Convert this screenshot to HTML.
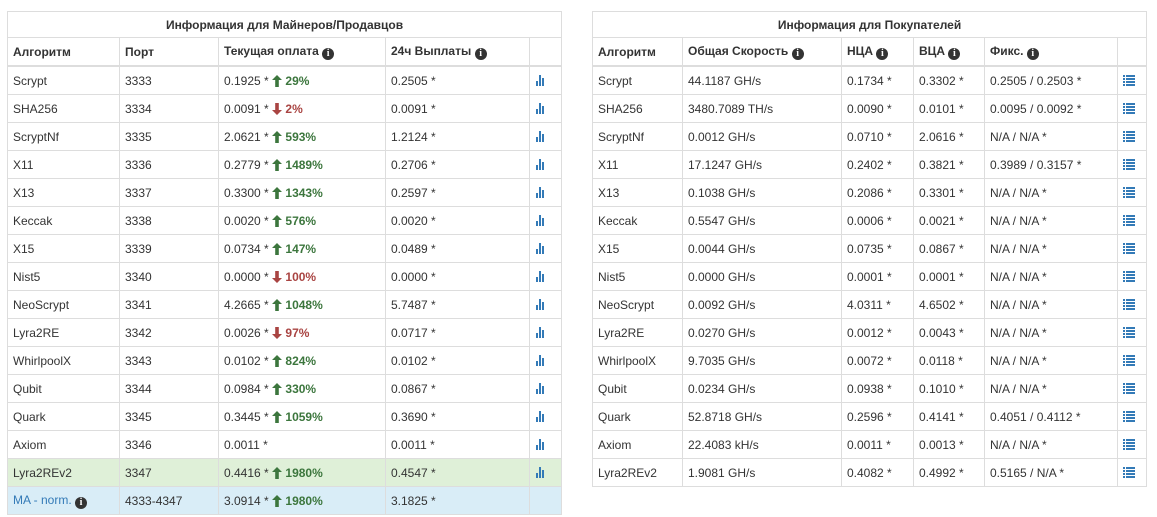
<!DOCTYPE html>
<html><head><meta charset="utf-8"><style>
body{margin:0;background:#fff;font-family:"Liberation Sans",Arial,sans-serif;font-size:12px;color:#333;}
table{position:absolute;top:11px;border-collapse:collapse;table-layout:fixed;}
td,th{border:1px solid #ddd;padding:0 5px;height:27px;text-align:left;white-space:nowrap;overflow:hidden;}
th{font-weight:bold;}
tr.t th{text-align:center;height:25px;}
tr.h th{border-bottom:2px solid #ddd;}
.i{display:inline-block;width:12px;height:12px;border-radius:50%;background:#333;color:#fff;font-size:10px;line-height:12px;text-align:center;font-weight:bold;font-family:"Liberation Serif",serif;vertical-align:-1px;}
.up{color:#3c763d;font-weight:bold;}
.dn{color:#a94442;font-weight:bold;}
.ar{display:inline-block;width:10px;height:12px;vertical-align:-2px;}
.bar{display:inline-block;width:12px;height:11px;position:relative;vertical-align:-1px;}
.bar i{position:absolute;bottom:0;background:#337ab7;width:2px;}
.lst{display:inline-block;width:12px;height:11px;vertical-align:-1px;background:repeating-linear-gradient(#337ab7 0 2px,transparent 2px 3px);position:relative;}
.lst:after{content:"";position:absolute;left:2px;top:0;width:1px;height:11px;background:#fff;}
tr.s td{background:#dff0d8;}
tr.n td{background:#d9edf7;}
a{color:#337ab7;text-decoration:none;}
</style></head><body>
<svg width="0" height="0" style="position:absolute"><defs>
<symbol id="u" viewBox="0 0 10 12"><path d="M5 0L10 5H6.8V12H3.2V5H0Z" fill="#3c763d"/></symbol>
<symbol id="d" viewBox="0 0 10 12"><path d="M5 12L10 7H6.8V0H3.2V7H0Z" fill="#a94442"/></symbol>
</defs></svg>

<table style="left:7px;width:554px">
<colgroup><col style="width:112px"><col style="width:99px"><col style="width:167px"><col style="width:144px"><col style="width:32px"></colgroup>
<tr class="t"><th colspan="5">Информация для Майнеров/Продавцов</th></tr>
<tr class="h"><th>Алгоритм</th><th>Порт</th><th>Текущая оплата <span class="i">i</span></th><th>24ч Выплаты <span class="i">i</span></th><th></th></tr>
<tr><td>Scrypt</td><td>3333</td><td>0.1925 * <svg class="ar"><use href="#u"/></svg> <span class="up">29%</span></td><td>0.2505 *</td><td><span class="bar"><i style="left:1px;height:5px"></i><i style="left:4px;height:11px"></i><i style="left:7px;height:8px"></i></span></td></tr>
<tr><td>SHA256</td><td>3334</td><td>0.0091 * <svg class="ar"><use href="#d"/></svg> <span class="dn">2%</span></td><td>0.0091 *</td><td><span class="bar"><i style="left:1px;height:5px"></i><i style="left:4px;height:11px"></i><i style="left:7px;height:8px"></i></span></td></tr>
<tr><td>ScryptNf</td><td>3335</td><td>2.0621 * <svg class="ar"><use href="#u"/></svg> <span class="up">593%</span></td><td>1.2124 *</td><td><span class="bar"><i style="left:1px;height:5px"></i><i style="left:4px;height:11px"></i><i style="left:7px;height:8px"></i></span></td></tr>
<tr><td>X11</td><td>3336</td><td>0.2779 * <svg class="ar"><use href="#u"/></svg> <span class="up">1489%</span></td><td>0.2706 *</td><td><span class="bar"><i style="left:1px;height:5px"></i><i style="left:4px;height:11px"></i><i style="left:7px;height:8px"></i></span></td></tr>
<tr><td>X13</td><td>3337</td><td>0.3300 * <svg class="ar"><use href="#u"/></svg> <span class="up">1343%</span></td><td>0.2597 *</td><td><span class="bar"><i style="left:1px;height:5px"></i><i style="left:4px;height:11px"></i><i style="left:7px;height:8px"></i></span></td></tr>
<tr><td>Keccak</td><td>3338</td><td>0.0020 * <svg class="ar"><use href="#u"/></svg> <span class="up">576%</span></td><td>0.0020 *</td><td><span class="bar"><i style="left:1px;height:5px"></i><i style="left:4px;height:11px"></i><i style="left:7px;height:8px"></i></span></td></tr>
<tr><td>X15</td><td>3339</td><td>0.0734 * <svg class="ar"><use href="#u"/></svg> <span class="up">147%</span></td><td>0.0489 *</td><td><span class="bar"><i style="left:1px;height:5px"></i><i style="left:4px;height:11px"></i><i style="left:7px;height:8px"></i></span></td></tr>
<tr><td>Nist5</td><td>3340</td><td>0.0000 * <svg class="ar"><use href="#d"/></svg> <span class="dn">100%</span></td><td>0.0000 *</td><td><span class="bar"><i style="left:1px;height:5px"></i><i style="left:4px;height:11px"></i><i style="left:7px;height:8px"></i></span></td></tr>
<tr><td>NeoScrypt</td><td>3341</td><td>4.2665 * <svg class="ar"><use href="#u"/></svg> <span class="up">1048%</span></td><td>5.7487 *</td><td><span class="bar"><i style="left:1px;height:5px"></i><i style="left:4px;height:11px"></i><i style="left:7px;height:8px"></i></span></td></tr>
<tr><td>Lyra2RE</td><td>3342</td><td>0.0026 * <svg class="ar"><use href="#d"/></svg> <span class="dn">97%</span></td><td>0.0717 *</td><td><span class="bar"><i style="left:1px;height:5px"></i><i style="left:4px;height:11px"></i><i style="left:7px;height:8px"></i></span></td></tr>
<tr><td>WhirlpoolX</td><td>3343</td><td>0.0102 * <svg class="ar"><use href="#u"/></svg> <span class="up">824%</span></td><td>0.0102 *</td><td><span class="bar"><i style="left:1px;height:5px"></i><i style="left:4px;height:11px"></i><i style="left:7px;height:8px"></i></span></td></tr>
<tr><td>Qubit</td><td>3344</td><td>0.0984 * <svg class="ar"><use href="#u"/></svg> <span class="up">330%</span></td><td>0.0867 *</td><td><span class="bar"><i style="left:1px;height:5px"></i><i style="left:4px;height:11px"></i><i style="left:7px;height:8px"></i></span></td></tr>
<tr><td>Quark</td><td>3345</td><td>0.3445 * <svg class="ar"><use href="#u"/></svg> <span class="up">1059%</span></td><td>0.3690 *</td><td><span class="bar"><i style="left:1px;height:5px"></i><i style="left:4px;height:11px"></i><i style="left:7px;height:8px"></i></span></td></tr>
<tr><td>Axiom</td><td>3346</td><td>0.0011 *</td><td>0.0011 *</td><td><span class="bar"><i style="left:1px;height:5px"></i><i style="left:4px;height:11px"></i><i style="left:7px;height:8px"></i></span></td></tr>
<tr class="s"><td>Lyra2REv2</td><td>3347</td><td>0.4416 * <svg class="ar"><use href="#u"/></svg> <span class="up">1980%</span></td><td>0.4547 *</td><td><span class="bar"><i style="left:1px;height:5px"></i><i style="left:4px;height:11px"></i><i style="left:7px;height:8px"></i></span></td></tr>
<tr class="n"><td><a>MA - norm.</a> <span class="i">i</span></td><td>4333-4347</td><td>3.0914 * <svg class="ar"><use href="#u"/></svg> <span class="up">1980%</span></td><td>3.1825 *</td><td></td></tr>
</table>

<table style="left:592px;width:554px">
<colgroup><col style="width:90px"><col style="width:159px"><col style="width:72px"><col style="width:71px"><col style="width:133px"><col style="width:29px"></colgroup>
<tr class="t"><th colspan="6">Информация для Покупателей</th></tr>
<tr class="h"><th>Алгоритм</th><th>Общая Скорость <span class="i">i</span></th><th>НЦА <span class="i">i</span></th><th>ВЦА <span class="i">i</span></th><th>Фикс. <span class="i">i</span></th><th></th></tr>
<tr><td>Scrypt</td><td>44.1187 GH/s</td><td>0.1734 *</td><td>0.3302 *</td><td>0.2505 / 0.2503 *</td><td><span class="lst"></span></td></tr>
<tr><td>SHA256</td><td>3480.7089 TH/s</td><td>0.0090 *</td><td>0.0101 *</td><td>0.0095 / 0.0092 *</td><td><span class="lst"></span></td></tr>
<tr><td>ScryptNf</td><td>0.0012 GH/s</td><td>0.0710 *</td><td>2.0616 *</td><td>N/A / N/A *</td><td><span class="lst"></span></td></tr>
<tr><td>X11</td><td>17.1247 GH/s</td><td>0.2402 *</td><td>0.3821 *</td><td>0.3989 / 0.3157 *</td><td><span class="lst"></span></td></tr>
<tr><td>X13</td><td>0.1038 GH/s</td><td>0.2086 *</td><td>0.3301 *</td><td>N/A / N/A *</td><td><span class="lst"></span></td></tr>
<tr><td>Keccak</td><td>0.5547 GH/s</td><td>0.0006 *</td><td>0.0021 *</td><td>N/A / N/A *</td><td><span class="lst"></span></td></tr>
<tr><td>X15</td><td>0.0044 GH/s</td><td>0.0735 *</td><td>0.0867 *</td><td>N/A / N/A *</td><td><span class="lst"></span></td></tr>
<tr><td>Nist5</td><td>0.0000 GH/s</td><td>0.0001 *</td><td>0.0001 *</td><td>N/A / N/A *</td><td><span class="lst"></span></td></tr>
<tr><td>NeoScrypt</td><td>0.0092 GH/s</td><td>4.0311 *</td><td>4.6502 *</td><td>N/A / N/A *</td><td><span class="lst"></span></td></tr>
<tr><td>Lyra2RE</td><td>0.0270 GH/s</td><td>0.0012 *</td><td>0.0043 *</td><td>N/A / N/A *</td><td><span class="lst"></span></td></tr>
<tr><td>WhirlpoolX</td><td>9.7035 GH/s</td><td>0.0072 *</td><td>0.0118 *</td><td>N/A / N/A *</td><td><span class="lst"></span></td></tr>
<tr><td>Qubit</td><td>0.0234 GH/s</td><td>0.0938 *</td><td>0.1010 *</td><td>N/A / N/A *</td><td><span class="lst"></span></td></tr>
<tr><td>Quark</td><td>52.8718 GH/s</td><td>0.2596 *</td><td>0.4141 *</td><td>0.4051 / 0.4112 *</td><td><span class="lst"></span></td></tr>
<tr><td>Axiom</td><td>22.4083 kH/s</td><td>0.0011 *</td><td>0.0013 *</td><td>N/A / N/A *</td><td><span class="lst"></span></td></tr>
<tr><td>Lyra2REv2</td><td>1.9081 GH/s</td><td>0.4082 *</td><td>0.4992 *</td><td>0.5165 / N/A *</td><td><span class="lst"></span></td></tr>
</table>
</body></html>
